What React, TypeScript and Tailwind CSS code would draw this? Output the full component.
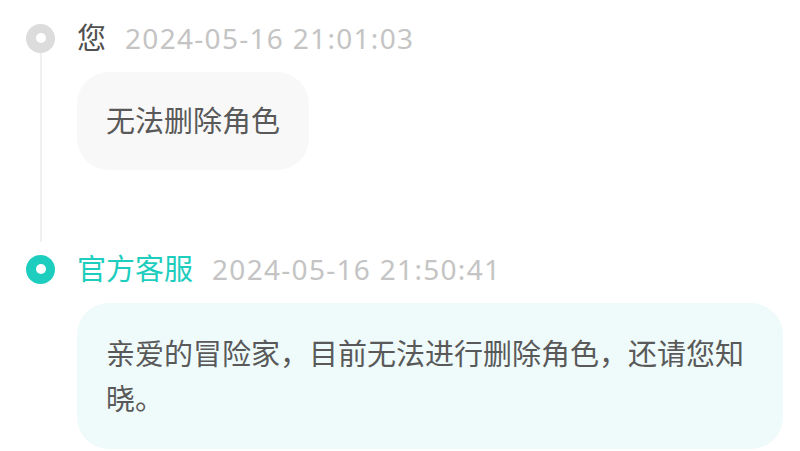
import React from 'react';

interface Message {
  author: string;
  time: string;
  text: string;
  official?: boolean;
}

const messages: Message[] = [
  { author: '您', time: '2024-05-16 21:01:03', text: '无法删除角色' },
  {
    author: '官方客服',
    time: '2024-05-16 21:50:41',
    text: '亲爱的冒险家，目前无法进行删除角色，还请您知晓。',
    official: true,
  },
];

const Dot: React.FC<{ official?: boolean }> = ({ official }) => (
  <div
    className={`w-[29px] h-[29px] rounded-full flex items-center justify-center shrink-0 ${
      official ? 'bg-[#1dcdbd]' : 'bg-[#dcdcdc]'
    }`}
  >
    <div className="w-[10px] h-[10px] rounded-full bg-white" />
  </div>
);

const TimelineItem: React.FC<{ msg: Message; last: boolean }> = ({ msg, last }) => (
  <div className={`flex ${last ? '' : 'pb-[79px]'}`}>
    {/* timeline column */}
    <div className="w-[29px] flex flex-col items-center pt-[5.5px]">
      <Dot official={msg.official} />
      {!last && <div className="w-[2px] flex-1 bg-[#f0f0f0] -mb-[72px]" />}
    </div>

    {/* content */}
    <div className="ml-[22px] flex-1 min-w-0">
      <div className="flex items-center gap-[19px] h-[40px] text-[29px]">
        <span className={msg.official ? 'text-[#1dcdbd]' : 'text-[#505050]'}>{msg.author}</span>
        <span className="text-[#c4c4c4] text-[28px] tracking-[1.3px]">{msg.time}</span>
      </div>
      <div
        className={`mt-[14px] rounded-[32px] px-[29px] text-[29px] text-[#595959] ${
          msg.official
            ? 'bg-[#effbfb] py-[28px] leading-[45px] mr-[17px]'
            : 'bg-[#f8f8f8] py-[29px] leading-[40px] w-fit'
        }`}
      >
        {msg.text}
      </div>
    </div>
  </div>
);

export default function App() {
  return (
    <div
      className="w-[800px] h-[451px] bg-white overflow-hidden pl-[26px] pt-[18px]"
      style={{ fontFamily: '"Noto Sans", "Noto Sans CJK SC", sans-serif' }}
    >
      {messages.map((m, i) => (
        <TimelineItem key={i} msg={m} last={i === messages.length - 1} />
      ))}
    </div>
  );
}
